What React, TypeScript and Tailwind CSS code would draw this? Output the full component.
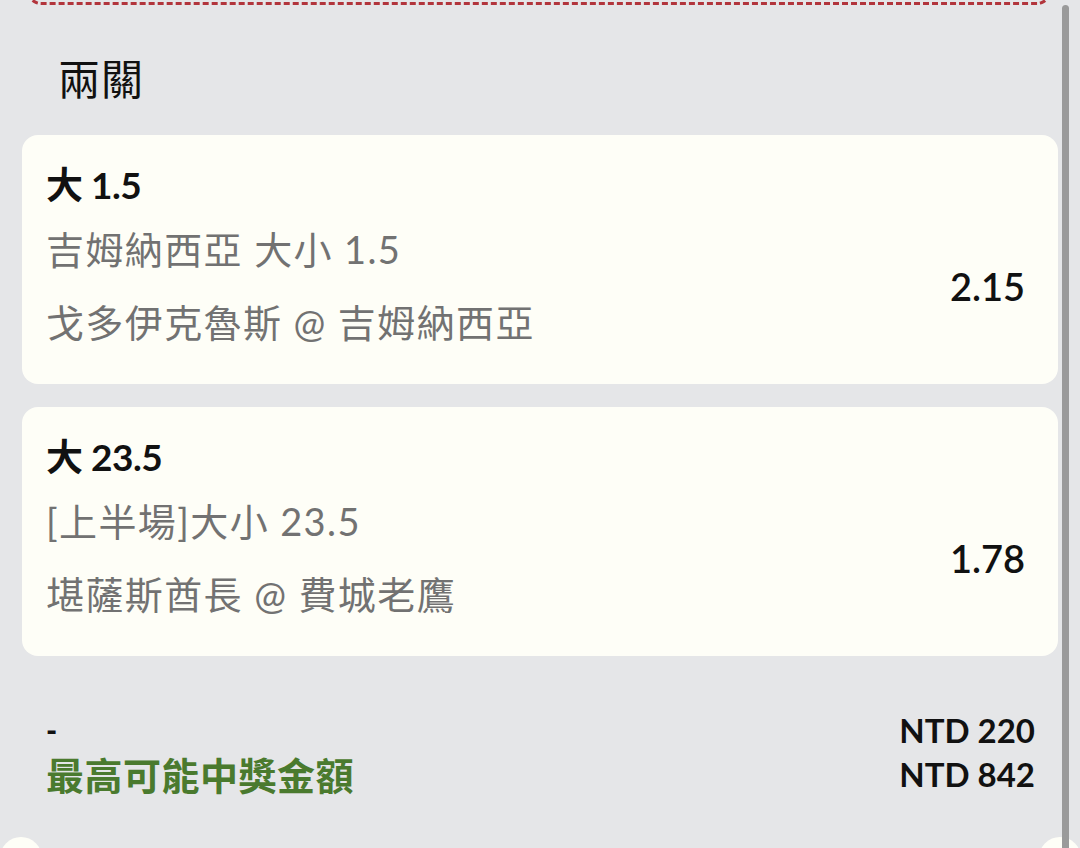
import React from "react";

const FONT = "font-['Lato','Noto_Sans_CJK_TC',sans-serif]";

type Leg = { pick: string; market: string; match: string; odds: string };

const legs: Leg[] = [
  { pick: "大 1.5", market: "吉姆納西亞 大小 1.5", match: "戈多伊克魯斯 @ 吉姆納西亞", odds: "2.15" },
  { pick: "大 23.5", market: "[上半場]大小 23.5", match: "堪薩斯酋長 @ 費城老鷹", odds: "1.78" },
];

function LegCard({ leg }: { leg: Leg }) {
  return (
    <div className="rounded-[16px] bg-[#fefef7] pl-[24px] pr-[33px] pt-[26px] pb-[25px]">
      <div className="h-[48px] leading-[48px] text-[37px] font-bold text-[#111] tracking-[-0.5px]">{leg.pick}</div>
      <div className="mt-[4px] flex items-center justify-between">
        <div className="text-[38px] text-[#727272] tracking-[1.4px]">
          <div className="h-[73px] leading-[73px] whitespace-nowrap">{leg.market}</div>
          <div className="h-[73px] leading-[73px] whitespace-nowrap">{leg.match}</div>
        </div>
        <div className="text-[38px] font-semibold text-[#111] leading-none">{leg.odds}</div>
      </div>
    </div>
  );
}

export default function App() {
  return (
    <div className={`${FONT} relative w-[1080px] h-[848px] overflow-hidden bg-[#e5e6e8]`}>
      {/* dashed box above, only its bottom edge visible */}
      <div className="absolute left-[27px] top-[-40px] w-[1024px] h-[45px] rounded-[14px] border-[3px] border-dashed border-[#b2353c]" />

      <div className="px-[22px] pt-[49px]">
        <div className="pl-[36px] h-[56px] leading-[56px] text-[42px] text-[#111] font-['Noto_Sans_CJK_TC',sans-serif] tracking-[1px]">兩關</div>
        <div className="mt-[30px] flex flex-col gap-[23px] w-[1036px]">
          {legs.map((l) => (
            <LegCard key={l.odds} leg={l} />
          ))}
        </div>

        <div className="mt-[52px] pl-[24px] pr-[23px] flex justify-between w-[1036px]">
          <div>
            <div className="h-[44px] flex items-center">
              <span className="text-[30px] leading-none font-black text-[#111]">-</span>
            </div>
            <div className="h-[44px] flex items-center">
              <span className="text-[38px] leading-none font-bold text-[#4a7a2e] font-['Noto_Sans_CJK_TC',sans-serif] tracking-[0.5px]">最高可能中獎金額</span>
            </div>
          </div>
          <div className="text-right text-[33px] font-bold text-[#111]">
            <div className="h-[44px] leading-[44px]">NTD 220</div>
            <div className="h-[44px] leading-[44px]">NTD 842</div>
          </div>
        </div>
      </div>

      {/* ticket notches */}
      <div className="absolute left-0 top-[837px] w-[42px] h-[42px] rounded-full bg-[#fefef7]" />
      <div className="absolute left-[1039px] top-[837px] w-[42px] h-[42px] rounded-full bg-[#fefef7]" />

      {/* scrollbar */}
      <div className="absolute left-[1062px] top-[5px] w-[7px] h-[860px] rounded-full bg-[#9a9a9a]" />
    </div>
  );
}
